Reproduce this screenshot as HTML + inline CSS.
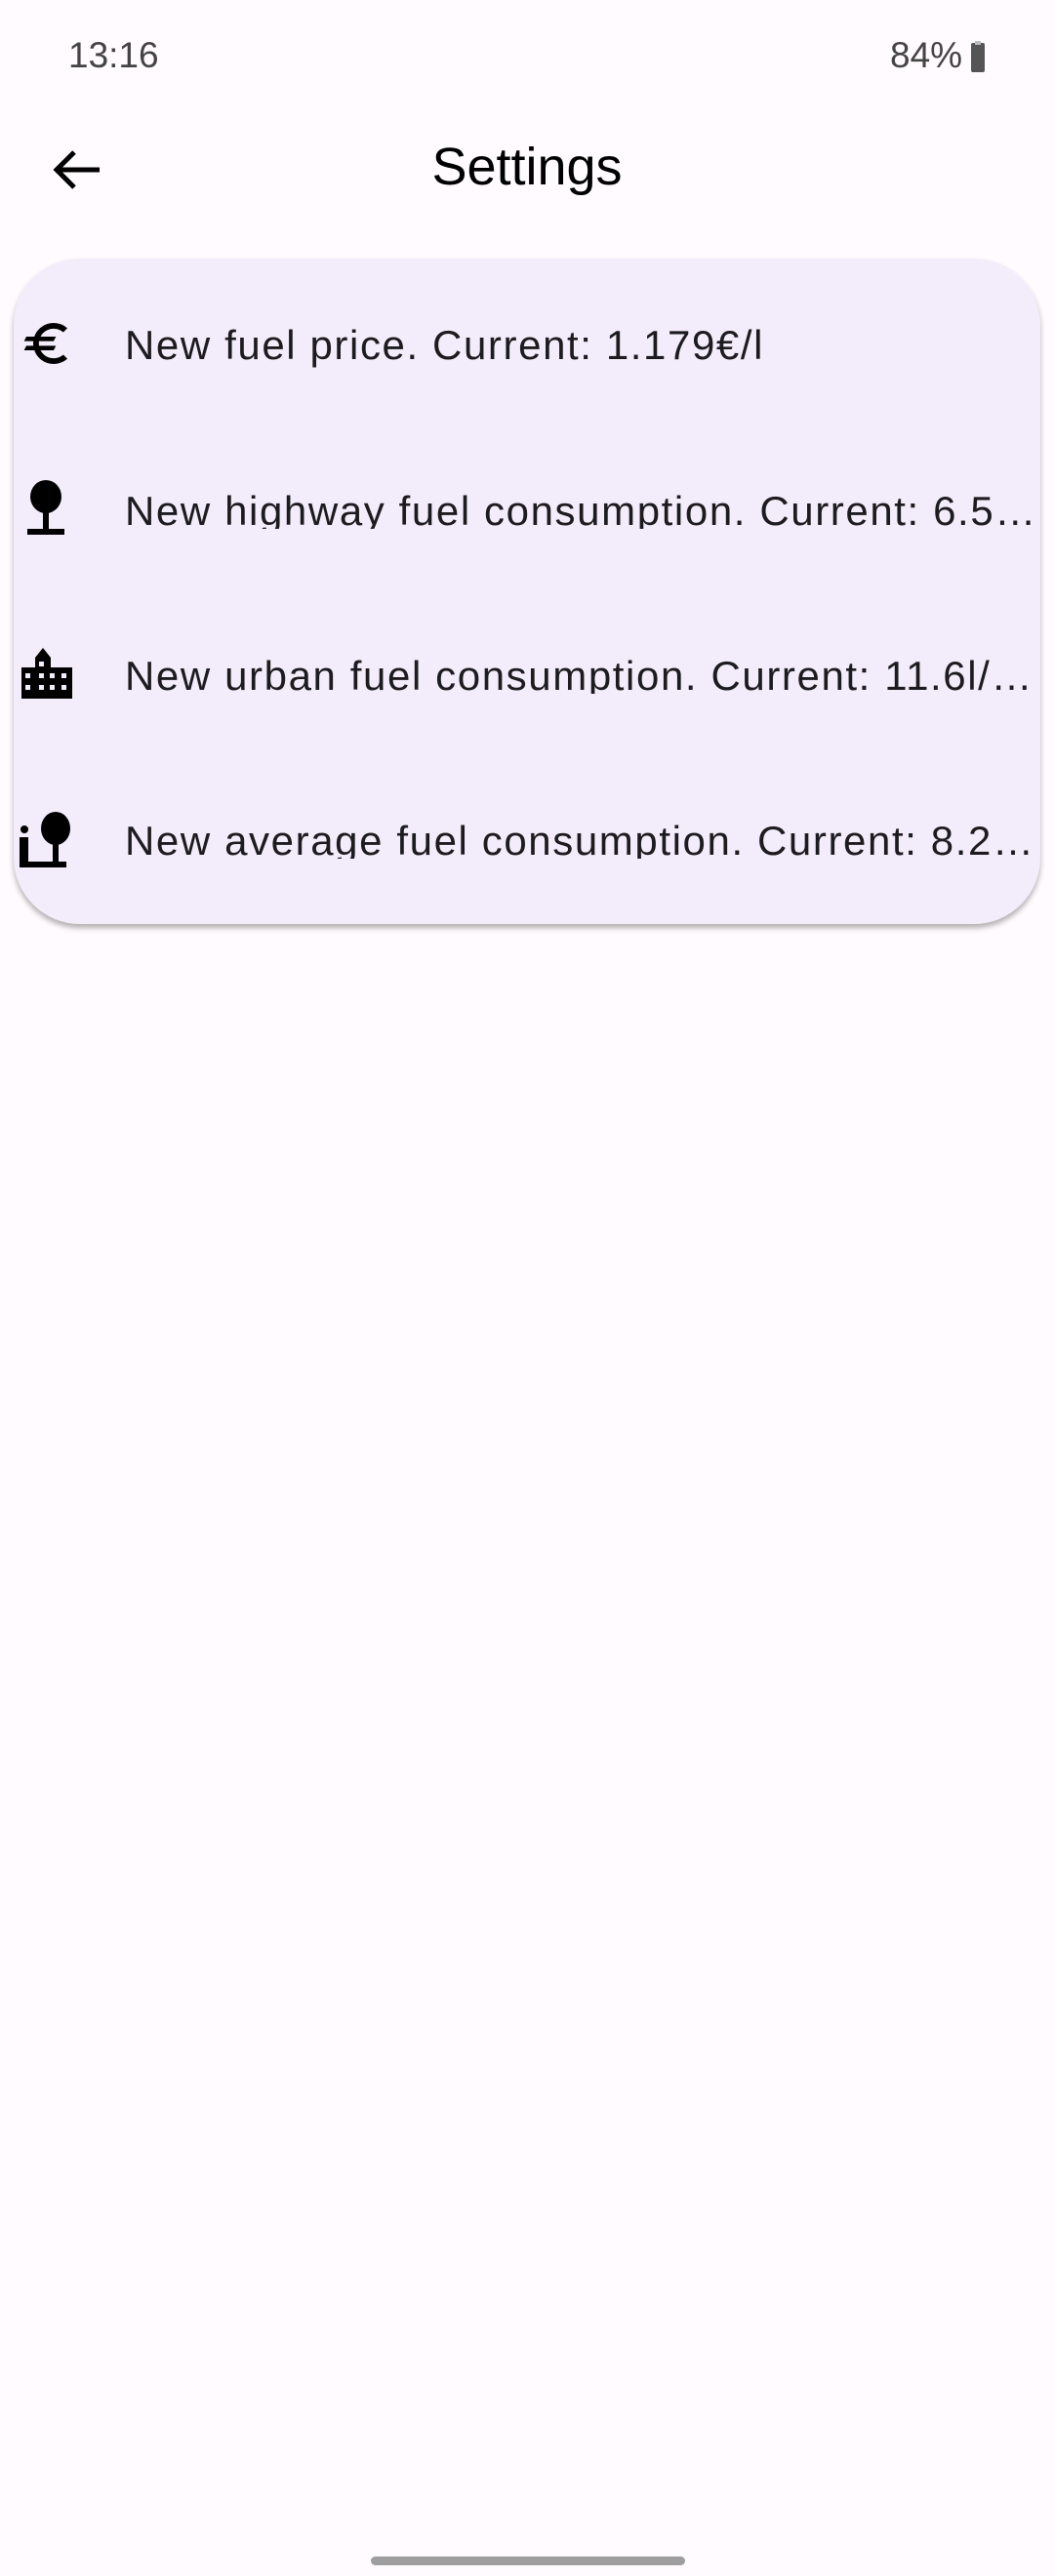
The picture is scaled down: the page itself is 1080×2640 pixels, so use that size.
<!DOCTYPE html>
<html><head><meta charset="utf-8"><style>
body{margin:0;width:1080px;height:2640px;background:#fffbfe;font-family:"Liberation Sans",sans-serif;position:relative;overflow:hidden}
.abs{position:absolute}
.card{left:14px;top:265px;width:1052px;height:682px;background:#f3edfb;border-radius:68px;box-shadow:0 4px 6px rgba(0,0,0,.3)}
.row{position:absolute;left:128px;width:938px;font-size:42px;color:#1c1b1f;white-space:nowrap;overflow:hidden;text-overflow:ellipsis;line-height:48px;letter-spacing:1.6px}
.clip{height:42px}
</style></head><body>
<div class="abs" style="left:70px;top:36px;font-size:37px;color:#444">13:16</div>
<div class="abs" style="left:912px;top:36px;font-size:37px;color:#444">84%</div>
<div class="abs" style="left:995px;top:44px;width:14px;height:30px;background:#555;border-radius:2px"></div>
<div class="abs" style="left:999px;top:42px;width:6px;height:4px;background:#bbb"></div>
<svg class="abs" style="left:52px;top:150px" width="54" height="48" viewBox="0 0 54 48"><path d="M50 24H8M24 6L6 24l18 18" stroke="#000" stroke-width="5" fill="none"/></svg>
<div class="abs" style="left:0;width:1080px;top:140px;text-align:center;font-size:54px;color:#000">Settings</div>
<div class="abs card"></div>
<svg class="abs" style="left:20px;top:324px" width="56" height="56" viewBox="0 0 24 24"><path fill="#000" d="M15 18.5A6.48 6.48 0 0 1 9.24 15H15l1-2H8.58c-.05-.33-.08-.66-.08-1s.03-.67.08-1H15l1-2H9.24A6.49 6.49 0 0 1 15 5.5c1.61 0 3.09.59 4.230 1.57L21 5.3A8.96 8.96 0 0 0 15 3c-3.92 0-7.240 2.51-8.48 6H3l-1 2h4.06a8.5 8.5 0 0 0 0 2H3l-1 2h4.52c1.24 3.49 4.56 6 8.48 6 2.31 0 4.41-.87 6-2.3l-1.78-1.77c-1.13.98-2.6 1.57-4.22 1.57z"/></svg>
<div class="row" style="top:330px">New fuel price. Current: 1.179€/l</div>
<svg class="abs" style="left:26px;top:492px" width="42" height="58" viewBox="0 0 42 58"><ellipse cx="21" cy="17" rx="16" ry="17" fill="#000"/><rect x="18" y="30" width="6" height="22" fill="#000"/><rect x="2" y="50" width="38" height="6" fill="#000"/></svg>
<div class="row clip" style="top:500px">New highway fuel consumption. Current: 6.5l/100km</div>
<svg class="abs" style="left:22px;top:664px" width="52" height="52" viewBox="0 0 52 52"><path fill="#000" d="M0 20h14V10l8-10 8 10v10h22v32H0z"/><g fill="#f3edfb"><rect x="4" y="26" width="5" height="5"/><rect x="4" y="38" width="5" height="5"/><rect x="18" y="14" width="5" height="5"/><rect x="18" y="26" width="5" height="5"/><rect x="18" y="38" width="5" height="5"/><rect x="29" y="26" width="5" height="5"/><rect x="29" y="38" width="5" height="5"/><rect x="41" y="26" width="5" height="5"/><rect x="41" y="38" width="5" height="5"/></g></svg>
<div class="row clip" style="top:669px">New urban fuel consumption. Current: 11.6l/100km</div>
<svg class="abs" style="left:20px;top:832px" width="58" height="58" viewBox="0 0 58 58"><ellipse cx="37" cy="17" rx="15" ry="17" fill="#000"/><rect x="34" y="30" width="6" height="22" fill="#000"/><rect x="0" y="51" width="48" height="6" fill="#000"/><rect x="0" y="26" width="9" height="27" fill="#000"/><circle cx="5" cy="18" r="4" fill="#000"/></svg>
<div class="row clip" style="top:838px">New average fuel consumption. Current: 8.2l/100km</div>
<div class="abs" style="left:380px;top:2620px;width:322px;height:9px;border-radius:5px;background:#9e9e9e"></div>
</body></html>
